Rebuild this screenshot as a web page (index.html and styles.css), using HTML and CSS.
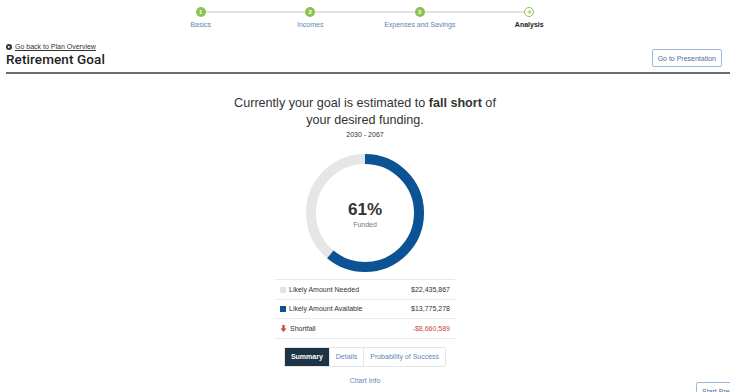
FILE: index.html
```html
<!DOCTYPE html>
<html lang="en">
<head>
    <meta charset="UTF-8">
    <meta name="viewport" content="width=device-width, initial-scale=1.0">
    <title>Retirement Goal</title>
    <link rel="stylesheet" href="styles.css">
</head>
<body>
    <div class="steps">
        <div class="step done"><span class="dot">1</span><span class="label">Basics</span></div>
        <div class="step done"><span class="dot">2</span><span class="label">Incomes</span></div>
        <div class="step done"><span class="dot">3</span><span class="label">Expenses and Savings</span></div>
        <div class="step current"><span class="dot">4</span><span class="label">Analysis</span></div>
    </div>

    <div class="header">
        <div class="titles">
            <a class="back" href="#">
                <svg width="6" height="6" viewBox="0 0 10 10"><circle cx="5" cy="5" r="5" fill="#333"/><path d="M6.8 5H3.4M5 3.2L3.2 5 5 6.8" stroke="#fff" stroke-width="1.5" fill="none"/></svg>
                <span>Go back to Plan Overview</span>
            </a>
            <h1>Retirement Goal</h1>
        </div>
        <button class="btn">Go to Presentation</button>
    </div>

    <div class="main">
        <h2>Currently your goal is estimated to <b>fall short</b> of<br>your desired funding.</h2>
        <div class="years">2030 - 2067</div>

        <div class="donut">
            <svg width="118" height="118" viewBox="0 0 118 118">
                <circle cx="59" cy="59" r="54" fill="none" stroke="#e6e6e6" stroke-width="10"/>
                <circle cx="59" cy="59" r="54" fill="none" stroke="#0b5394" stroke-width="10"
                        stroke-dasharray="206.97 339.29" transform="rotate(-90 59 59)"/>
            </svg>
            <div class="donut-text">
                <div class="pct">61%</div>
                <div class="funded">Funded</div>
            </div>
        </div>

        <table class="amounts">
            <tr>
                <td><span class="sq needed"></span>Likely Amount Needed</td>
                <td class="num">$22,435,867</td>
            </tr>
            <tr>
                <td><span class="sq available"></span>Likely Amount Available</td>
                <td class="num">$13,775,278</td>
            </tr>
            <tr class="short">
                <td><svg class="arrow" width="7" height="7" viewBox="0 0 10 10"><path d="M5 10L0.5 5H3.3V0H6.7V5H9.5Z" fill="#c94a3d"/></svg>Shortfall</td>
                <td class="num">-$8,660,589</td>
            </tr>
        </table>

        <div class="tabs">
            <span class="tab active">Summary</span>
            <span class="tab">Details</span>
            <span class="tab">Probability of Success</span>
        </div>

        <a class="chart-info" href="#">Chart Info</a>
    </div>

    <button class="btn start">Start Presentation</button>
</body>
</html>
```

FILE: styles.css
```css
body {
    margin: 0;
    font-family: "Liberation Sans", Arial, sans-serif;
    color: #333;
    background: #fff;
}

.steps {
    position: relative;
    width: 438px;
    margin: 0 auto;
    padding-top: 7px;
    display: flex;
}

.steps::before {
    content: "";
    position: absolute;
    left: 55px;
    right: 55px;
    top: 11px;
    height: 2px;
    background: #e3e3e3;
}

.step {
    flex: 1;
    display: flex;
    flex-direction: column;
    align-items: center;
    position: relative;
}

.dot {
    width: 10px;
    height: 10px;
    border-radius: 50%;
    background: #8cc24f;
    color: #fff;
    font-size: 6px;
    font-weight: bold;
    line-height: 10px;
    text-align: center;
    box-sizing: border-box;
}

.current .dot {
    background: #fff;
    border: 1px solid #8cc24f;
    color: #8cc24f;
    line-height: 8px;
}

.label {
    margin-top: 4px;
    font-size: 7px;
    color: #5b88b5;
}

.current .label {
    color: #222;
    font-weight: bold;
}

.header {
    margin: 15px 0 0 6px;
    padding-right: 8px;
    display: flex;
    justify-content: space-between;
    align-items: flex-end;
    border-bottom: 2px solid #6b6b6b;
    padding-bottom: 5px;
}

.back {
    display: flex;
    align-items: center;
    gap: 3px;
    font-size: 7px;
    color: #333;
}

.back span {
    text-decoration: underline;
}

h1 {
    margin: 1px 0 0;
    font-family: Roboto, "Liberation Sans", sans-serif;
    font-size: 13.5px;
    font-weight: 500;
    color: #222;
    letter-spacing: 0.1px;
}

.btn {
    font-family: inherit;
    font-size: 7px;
    color: #4f6f93;
    background: #fff;
    border: 1px solid #9fbad6;
    border-radius: 2px;
    padding: 0 5px;
    height: 18px;
    margin-bottom: 0;
    white-space: nowrap;
}

.main {
    display: flex;
    flex-direction: column;
    align-items: center;
}

h2 {
    margin: 21px 0 0;
    font-size: 12.6px;
    font-weight: normal;
    line-height: 17px;
    text-align: center;
    color: #333;
}

.years {
    margin-top: 2px;
    font-size: 7px;
}

.donut {
    position: relative;
    margin-top: 16px;
    width: 118px;
    height: 118px;
}

.donut svg {
    display: block;
}

.donut-text {
    position: absolute;
    inset: 0;
    display: flex;
    flex-direction: column;
    align-items: center;
    justify-content: center;
}

.pct {
    font-size: 17px;
    font-weight: bold;
    color: #333;
    margin-top: 1px;
}

.funded {
    margin-top: 1px;
    font-size: 7px;
    color: #777;
}

.amounts {
    margin-top: 7px;
    width: 180px;
    border-collapse: collapse;
    font-size: 7px;
}

.amounts td {
    height: 18.5px;
    padding: 0 5px;
    border-top: 1px solid #e8e8e8;
    border-bottom: 1px solid #e8e8e8;
    color: #333;
}

.amounts .num {
    text-align: right;
}

.sq {
    display: inline-block;
    width: 6px;
    height: 6px;
    margin-right: 3px;
    vertical-align: -1px;
}

.needed {
    background: #e3e3e3;
}

.available {
    background: #0b5394;
}

.arrow {
    margin-right: 3px;
    vertical-align: -1px;
}

.short .num {
    color: #c94a3d;
}

.tabs {
    margin-top: 8px;
    display: flex;
    border: 1px solid #e6e6e6;
    border-radius: 2px;
}

.tab {
    height: 18px;
    line-height: 18px;
    padding: 0 6px;
    font-size: 7px;
    color: #5b88b5;
    border-left: 1px solid #e6e6e6;
}

.tab:first-child {
    border-left: none;
}

.tab.active {
    background: #1d3346;
    color: #fff;
    font-weight: bold;
}

.chart-info {
    margin-top: 10px;
    font-size: 7px;
    color: #5b88b5;
    text-decoration: none;
}

.start {
    position: fixed;
    left: 696px;
    top: 382px;
    text-align: left;
}
```
